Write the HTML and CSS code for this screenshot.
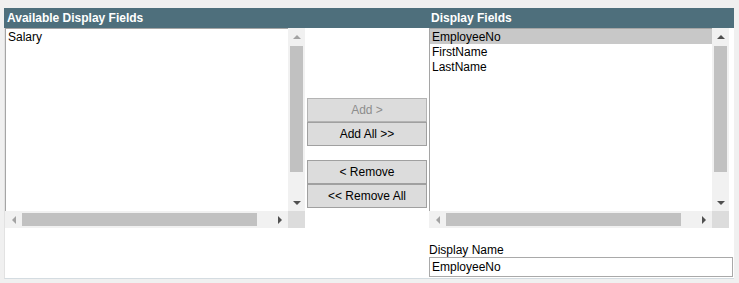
FILE: index.html
```html
<!DOCTYPE html>
<html>
<head>
    <title>Display Fields</title>
    <meta name="viewport" content="width=device-width, initial-scale=1.0">
    <link rel="stylesheet" href="styles.css">
</head>

<body>

<div class="picker">
    <div class="head">
        <div class="head-left">Available Display Fields</div>
        <div></div>
        <div class="head-right">Display Fields</div>
    </div>

    <div class="main">
        <div class="lists">
            <div class="listbox">
                <div class="items">
                    <div class="item">Salary</div>
                </div>
                <div class="vscroll">
                    <div class="arrow"><span class="tri up off"></span></div>
                    <div class="track"><div class="vthumb"></div></div>
                    <div class="arrow"><span class="tri down"></span></div>
                </div>
                <div class="hscroll">
                    <div class="arrow"><span class="tri left off"></span></div>
                    <div class="hthumb"></div>
                    <div class="track"></div>
                    <div class="arrow"><span class="tri right"></span></div>
                </div>
                <div class="corner"></div>
            </div>

            <div class="moves">
                <div class="btn-group">
                    <button class="btn" disabled>Add &gt;</button>
                    <button class="btn">Add All &gt;&gt;</button>
                </div>
                <div class="btn-group">
                    <button class="btn">&lt; Remove</button>
                    <button class="btn">&lt;&lt; Remove All</button>
                </div>
            </div>

            <div class="listbox">
                <div class="items">
                    <div class="item selected">EmployeeNo</div>
                    <div class="item">FirstName</div>
                    <div class="item">LastName</div>
                </div>
                <div class="vscroll">
                    <div class="arrow"><span class="tri up"></span></div>
                    <div class="track"><div class="vthumb"></div></div>
                    <div class="arrow"><span class="tri down"></span></div>
                </div>
                <div class="hscroll">
                    <div class="arrow"><span class="tri left off"></span></div>
                    <div class="hthumb"></div>
                    <div class="track"></div>
                    <div class="arrow"><span class="tri right"></span></div>
                </div>
                <div class="corner"></div>
            </div>
        </div>

        <div class="foot">
            <div class="name-field">
                <label for="displayName">Display Name</label>
                <input type="text" id="displayName" value="EmployeeNo">
            </div>
        </div>
    </div>
</div>

</body>
</html>
```

FILE: styles.css
```css
body {
    font-family: "Liberation Sans", Arial, sans-serif;
    font-size: 12px;
    margin: 0;
    padding: 0;
    background: #f0f0f0;
}

.picker {
    width: 730px;
    margin: 8px 0 0 4px;
}

.head {
    display: grid;
    grid-template-columns: 301px 124px 1fr;
    height: 20px;
    line-height: 20px;
    background: #4e6f7c;
    color: white;
    font-weight: bold;
}

.head-left {
    padding-left: 3px;
}

.head-right {
    padding-left: 2px;
}

.main {
    background: white;
    border-left: 1px solid #e2e2e2;
    border-bottom: 1px solid #d4dce1;
}

.lists {
    display: flex;
    height: 200px;
}

/* list with its scrollbars */
.listbox {
    width: 300px;
    display: grid;
    grid-template-columns: 283px 17px;
    grid-template-rows: 183px 17px;
}

.items {
    border-top: 1px solid #a5a5a5;
    border-left: 1px solid #a5a5a5;
    background: white;
}

.item {
    height: 15px;
    line-height: 16px;
    padding-left: 2px;
    color: #000;
}

.item.selected {
    background: #c8c8c8;
}

.vscroll {
    display: flex;
    flex-direction: column;
    background: #f1f1f1;
}

.hscroll {
    display: flex;
    background: #f1f1f1;
}

.arrow {
    width: 17px;
    height: 17px;
    flex: none;
    display: flex;
    align-items: center;
    justify-content: center;
}

.track {
    flex: 1;
}

.vthumb {
    margin: 1px 0 0 2px;
    width: 13px;
    height: 126px;
    background: #c1c1c1;
}

.hthumb {
    margin-top: 2px;
    width: 235px;
    height: 13px;
    background: #c1c1c1;
}

.corner {
    background: #dcdcdc;
}

.tri {
    width: 0;
    height: 0;
    border: 4px solid transparent;
}

.tri.up {
    border-top-width: 0;
    border-bottom-color: #505050;
}

.tri.down {
    border-bottom-width: 0;
    border-top-color: #505050;
}

.tri.left {
    border-left-width: 0;
    border-right-color: #505050;
}

.tri.right {
    border-right-width: 0;
    border-left-color: #505050;
}

.tri.up.off {
    border-bottom-color: #a3a3a3;
}

.tri.left.off {
    border-right-color: #a3a3a3;
}

/* middle buttons */
.moves {
    width: 124px;
    padding: 70px 0 0 2px;
    box-sizing: border-box;
    display: flex;
    flex-direction: column;
    gap: 14px;
}

.btn-group {
    display: flex;
    flex-direction: column;
}

.btn {
    width: 120px;
    height: 24px;
    padding: 0;
    margin: 0;
    border: 1px solid #a0a0a0;
    background: #dcdcdc;
    color: #000;
    font-family: "Liberation Sans", Arial, sans-serif;
    font-size: 12px;
}

.btn:disabled {
    color: #8d8d8d;
    border-color: #b4b4b4;
}

.foot {
    display: grid;
    grid-template-columns: 300px 124px 1fr;
    height: 50px;
}

.name-field {
    grid-column: 3;
    padding-top: 15px;
}

.name-field label {
    display: block;
    height: 14px;
    line-height: 14px;
    color: #000;
}

.name-field input {
    display: block;
    box-sizing: border-box;
    width: 304px;
    height: 20px;
    margin: 0;
    padding: 0 2px;
    border: 1px solid #a9a9a9;
    font-family: "Liberation Sans", Arial, sans-serif;
    font-size: 12px;
    color: #000;
}
```
